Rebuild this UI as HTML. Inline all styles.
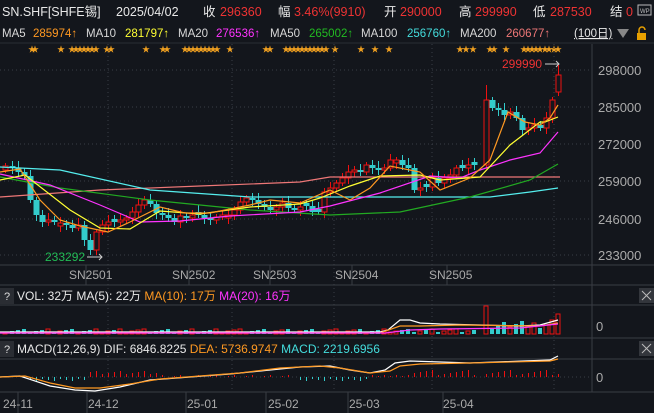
<!DOCTYPE html><html><head><meta charset="utf-8"><style>
body{margin:0;background:#13161c;width:654px;height:413px;overflow:hidden;font-family:"Liberation Sans","Noto Sans CJK SC",sans-serif;}
svg{display:block}
text{font-family:"Liberation Sans","Noto Sans CJK SC",sans-serif}
</style></head><body>
<svg id="s" width="654" height="413" xmlns="http://www.w3.org/2000/svg">
<rect width="654" height="413" fill="#13161c"/>
<g font-size="12.5">
<text x="2" y="16" fill="#e8e8e8">SN.SHF[SHFE锡]</text>
<text x="116" y="16" fill="#e8e8e8">2025/04/02</text>
<text x="203" y="16" fill="#e8e8e8">收</text><text x="220" y="16" fill="#ee3333">296360</text>
<text x="278" y="16" fill="#e8e8e8">幅</text><text x="294" y="16" fill="#ee3333">3.46%(9910)</text>
<text x="384" y="16" fill="#e8e8e8">开</text><text x="400" y="16" fill="#ee3333">290000</text>
<text x="459" y="16" fill="#e8e8e8">高</text><text x="475" y="16" fill="#ee3333">299990</text>
<text x="533" y="16" fill="#e8e8e8">低</text><text x="550" y="16" fill="#ee3333">287530</text>
<text x="610" y="16" fill="#e8e8e8">结</text><text x="626" y="16" fill="#ee3333">0</text>
</g>
<rect x="638" y="5" width="13" height="10" fill="none" stroke="#bbb"/><text x="640" y="13" font-size="6" fill="#bbb">WP</text>
<g font-size="11.5">
<text x="2" y="37" fill="#d8d8d8">MA5</text><text x="33" y="37" fill="#ff9922">285974↑</text>
<text x="86" y="37" fill="#d8d8d8">MA10</text><text x="125" y="37" fill="#ffff33">281797↑</text>
<text x="178" y="37" fill="#d8d8d8">MA20</text><text x="216" y="37" fill="#ff33ff">276536↑</text>
<text x="270" y="37" fill="#d8d8d8">MA50</text><text x="309" y="37" fill="#22bb22">265002↑</text>
<text x="361" y="37" fill="#d8d8d8">MA100</text><text x="407" y="37" fill="#44dddd">256760↑</text>
<text x="460" y="37" fill="#d8d8d8">MA200</text><text x="506" y="37" fill="#ee7777">260677↑</text>
<text x="574" y="37" fill="#e8e8e8" text-decoration="underline">(100日)</text>
</g>
<polygon points="617,29 629,29 623,38" fill="#888"/>
<rect x="637" y="33" width="9" height="7" fill="#e8a000"/><path d="M639 33v-3a3 3 0 0 1 6 0" stroke="#e8a000" fill="none" stroke-width="1.5"/>
<line x1="0" y1="43" x2="654" y2="43" stroke="#2a2d34"/>
<g id="stars" font-size="8" fill="#f0a020"></g>
<g stroke="#3a3e46" stroke-dasharray="1,3">
<line x1="0" y1="70" x2="592" y2="70"/><line x1="0" y1="107" x2="592" y2="107"/><line x1="0" y1="144" x2="592" y2="144"/>
<line x1="0" y1="181" x2="592" y2="181"/><line x1="0" y1="219" x2="592" y2="219"/><line x1="0" y1="255" x2="592" y2="255"/>
<line x1="108" y1="44" x2="108" y2="392"/><line x1="232" y1="44" x2="232" y2="392"/><line x1="334" y1="44" x2="334" y2="392"/><line x1="432" y1="44" x2="432" y2="392"/><line x1="554" y1="44" x2="554" y2="392"/>
<line x1="0" y1="377" x2="592" y2="377"/>
</g>
<g stroke="#3a3d44">
<line x1="592" y1="44" x2="592" y2="392"/>
<line x1="0" y1="265" x2="654" y2="265"/><line x1="0" y1="285" x2="654" y2="285"/><line x1="0" y1="305" x2="654" y2="305"/>
<line x1="0" y1="338" x2="654" y2="338"/><line x1="0" y1="359" x2="654" y2="359"/><line x1="0" y1="392" x2="654" y2="392"/>
<line x1="86" y1="265" x2="86" y2="285"/><line x1="189" y1="265" x2="189" y2="285"/><line x1="270" y1="265" x2="270" y2="285"/><line x1="352" y1="265" x2="352" y2="285"/><line x1="447" y1="265" x2="447" y2="285"/>
<line x1="18" y1="392" x2="18" y2="413"/><line x1="87" y1="392" x2="87" y2="413"/><line x1="186" y1="392" x2="186" y2="413"/><line x1="266" y1="392" x2="266" y2="413"/><line x1="348" y1="392" x2="348" y2="413"/><line x1="443" y1="392" x2="443" y2="413"/>
</g>
<g font-size="13" fill="#aaaaaa">
<text x="598" y="75">298000</text><text x="598" y="112">285000</text><text x="598" y="149">272000</text>
<text x="598" y="186">259000</text><text x="598" y="224">246000</text><text x="598" y="260">233000</text>
<text x="596" y="331">0</text><text x="596" y="382">0</text>
</g>
<g font-size="12" fill="#aaaaaa">
<text x="69" y="279">SN2501</text><text x="172" y="279">SN2502</text><text x="253" y="279">SN2503</text><text x="335" y="279">SN2504</text><text x="429" y="279">SN2505</text>
<text x="3" y="408">24-11</text><text x="88" y="408">24-12</text><text x="187" y="408">25-01</text><text x="268" y="408">25-02</text><text x="349" y="408">25-03</text><text x="443" y="408">25-04</text>
</g>
<text x="45" y="261" font-size="12" fill="#22bb55">233292</text><path d="M87 257h15m-3-3l3 3-3 3" stroke="#ccc" fill="none"/>
<text x="502" y="68" font-size="12" fill="#ee3333">299990</text><path d="M545 64h14m-3-3l3 3-3 3" stroke="#ccc" fill="none"/>
<rect x="0" y="288" width="14" height="16" fill="#2a2d33"/><text x="4" y="300" font-size="11" fill="#ddd">?</text>
<text x="17" y="300" font-size="12"><tspan fill="#e8e8e8">VOL: 32万 MA(5): 22万 </tspan><tspan fill="#ff9922">MA(10): 17万 </tspan><tspan fill="#ff33ff">MA(20): 16万</tspan></text>
<rect x="0" y="341" width="14" height="16" fill="#2a2d33"/><text x="4" y="353" font-size="11" fill="#ddd">?</text>
<text x="17" y="353" font-size="12"><tspan fill="#e8e8e8">MACD(12,26,9) DIF: 6846.8225 </tspan><tspan fill="#ff9922">DEA: 5736.9747 </tspan><tspan fill="#44dddd">MACD: 2219.6956</tspan></text>
<rect x="639" y="288" width="15" height="15" fill="#33363c"/><path d="M642 291l9 9m0-9l-9 9" stroke="#bbb"/>
<rect x="639" y="341" width="15" height="15" fill="#33363c"/><path d="M642 344l9 9m0-9l-9 9" stroke="#bbb"/>
<g id="c"></g>
<g fill="none" stroke-width="1.2">
<polyline stroke="#ee7777" points="0,197 100,190 200,186 300,182 330,177 560,177"/>
<polyline stroke="#55eeee" points="0,167 60,170 150,190 250,197 330,197 490,197 530,192 558,188"/>
<polyline stroke="#22aa22" points="0,177 60,188 150,200 250,210 330,215 400,212 470,197 530,180 558,164"/>
<polyline stroke="#ff33ff" points="0,174 50,185 100,205 140,222 180,221 230,216 300,212 330,206 380,193 430,176 460,178 480,170 510,160 540,153 558,132"/>
<polyline stroke="#ffff33" points="0,180 25,175 70,210 100,228 130,229 160,211 200,214 250,207 300,204 320,198 350,186 380,176 420,175 440,180 480,177 510,145 540,122 545,122 558,117"/>
<polyline stroke="#ff9922" points="0,172 20,169 40,200 60,220 80,226 108,232 130,222 160,207 185,213 210,213 250,205 270,200 300,203 330,190 350,200 370,188 390,166 420,172 440,190 470,178 490,160 508,112 525,122 540,125 550,118 558,105"/>
<polyline stroke="#ffffff" points="0,332 380,332 388,330 400,320 410,320 420,323 440,324 520,326 540,325 558,320"/>
<polyline stroke="#ff9922" points="0,333 380,333 400,326 420,326 460,325 540,326 558,323"/>
<polyline stroke="#ff33ff" points="0,333 385,333 410,330 440,329 520,328 558,324"/>
<polyline stroke="#ffffff" points="0,377 20,376 50,386 75,390 95,391 120,387 150,380 190,377 230,374 270,370 300,367 330,366 350,370 370,373 385,370 395,363 410,361 440,362 470,363 550,360 558,356"/>
<polyline stroke="#ff9922" points="0,377 25,376 50,383 75,388 100,388 130,384 160,379 200,376 240,373 280,368 320,366 340,368 370,373 390,371 400,366 420,364 470,363 550,361 558,359"/>
</g>
</svg>
<script>
(function(){
var ys=[[5,166],[12,168],[18,172],[24,176],[30,200],[36,215],[42,222],[48,220],[54,222],[60,223],[66,225],[72,228],[78,225],[84,240],[90,250],[96,232],[102,225],[108,222],[114,222],[120,220],[126,218],[132,212],[138,205],[144,200],[150,204],[156,213],[162,215],[168,218],[174,222],[180,216],[186,218],[192,215],[198,215],[204,218],[210,220],[216,217],[222,215],[228,215],[234,210],[240,202],[246,198],[252,200],[258,204],[264,207],[270,210],[276,207],[282,203],[288,208],[294,210],[300,207],[306,206],[312,212],[318,212],[324,192],[330,188],[336,183],[342,178],[348,172],[354,170],[360,172],[366,165],[372,168],[378,170],[384,168],[390,160],[396,160],[402,165],[408,168],[414,190],[420,188],[426,187],[432,178],[438,183],[444,178],[450,175],[456,168],[462,168],[468,165],[474,165],[486,100],[492,108],[498,110],[504,115],[510,112],[516,118],[522,130],[528,128],[534,125],[540,128],[546,118],[552,100],[558,75]];
var g=document.getElementById('c'),h="";
var prev=170;
for(var i=0;i<ys.length;i++){var x=ys[i][0],c=ys[i][1],o=prev;if(i==ys.length-1)o=92;if(x==486)o=165;
 if(Math.abs(o-c)<2)o=c+((i%2)?3:-3);
 var up=c<o,tp=Math.min(o,c),bt=Math.max(o,c),hi=tp-3-(i*7%5),lo=bt+3+(i*3%4);
 if(x==486)hi=85;if(x==558)hi=65;if(x==96)lo=255;
 var col=up?"#ee1111":"#33cccc";
 h+='<line x1="'+(x+0.5)+'" y1="'+hi+'" x2="'+(x+0.5)+'" y2="'+lo+'" stroke="'+col+'"/>';
 h+=up?'<rect x="'+(x-2)+'" y="'+tp+'" width="5" height="'+(bt-tp)+'" fill="#13161c" stroke="'+col+'"/>':'<rect x="'+(x-2.5)+'" y="'+tp+'" width="6" height="'+(bt-tp)+'" fill="'+col+'"/>';
 var vh=2+(i*5%4);if(x>=480)vh=6+(i*3%8);if(x==486)vh=28;if(x==558)vh=20;if(x==552)vh=14;
 h+='<rect x="'+(x-2)+'" y="'+(334-vh)+'" width="4" height="'+vh+'" fill="'+(up?"none":col)+'" stroke="'+(up?col:"none")+'"/>';
 var m=0;if(x<90)m=(x<30?0:2+i%3);else if(x<160)m=-(3+i%4);else if(x<300)m=-(i%3);else if(x<370)m=2+i%3;else if(x<410)m=-(1+i%2);else m=-(2+i%6);
 if(m>0)h+='<rect x="'+x+'" y="377" width="1" height="'+m+'" fill="#33cccc"/>';else if(m<0)h+='<rect x="'+x+'" y="'+(377+m)+'" width="1" height="'+(-m)+'" fill="#ee1111"/>';
 prev=c;}
g.innerHTML=h;
var st=document.getElementById('stars'),sx=[28,31,57,68,72,76,80,84,88,92,103,107,142,159,163,181,185,189,193,197,201,205,209,213,226,262,266,282,286,290,294,298,302,306,310,314,318,322,331,357,371,385,456,462,469,486,490,502,520,524,528,532,536,541,545,550,554];
var sh="";sx.forEach(function(x){sh+='<text x="'+x+'" y="52">★</text>';});st.innerHTML=sh;
})();
</script>
</body></html>
